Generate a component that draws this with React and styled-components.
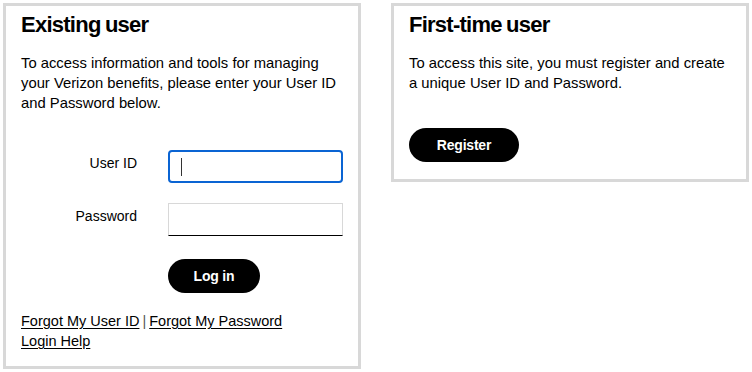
import React from "react";
import styled, { createGlobalStyle } from "styled-components";

const Global = createGlobalStyle`
  html, body { margin: 0; padding: 0; background: #fff; }
  body {
    font-family: "Liberation Sans", Arial, Helvetica, sans-serif;
    color: #000;
    -webkit-font-smoothing: antialiased;
  }
  * { box-sizing: border-box; }
`;

const Page = styled.div`
  display: flex;
  align-items: flex-start;
  gap: 30px;
  padding: 3px;
`;

const Card = styled.section`
  width: 358px;
  border: 3px solid #d8d8d8;
  padding: 6px 15px ${(p) => p.$padBottom || 15}px;
  display: flex;
  flex-direction: column;
  align-items: flex-start;
`;

const Heading = styled.h2`
  margin: 0;
  font-size: 22px;
  line-height: 26px;
  font-weight: 700;
  letter-spacing: -0.75px;
  word-spacing: -1px;
`;

const Intro = styled.p`
  margin: 15px 0 0;
  font-size: 14.8px;
  line-height: 20px;
`;

const Form = styled.div`
  margin-top: 37px;
  width: 100%;
  display: grid;
  grid-template-columns: 116px 1fr;
  column-gap: 31px;
  row-gap: 20px;
  align-items: start;
`;

const Label = styled.label`
  font-size: 14px;
  line-height: 20px;
  text-align: right;
  padding-top: 3px;
`;

const InputWrap = styled.div`
  position: relative;
  height: 33px;
`;

const Input = styled.input`
  width: 100%;
  height: 33px;
  margin: 0;
  padding: 0 12px;
  font: inherit;
  font-size: 14px;
  background: #fff;
  outline: none;
  border: ${(p) => (p.$focused ? "2px solid #0a64d3" : "1px solid #d8d8d8")};
  border-bottom-color: ${(p) => (p.$focused ? "#0a64d3" : "#000")};
  border-radius: ${(p) => (p.$focused ? "4px" : "0")};
`;

const Caret = styled.span`
  position: absolute;
  left: 13px;
  top: 8px;
  width: 1px;
  height: 18px;
  background: #333;
`;

const ButtonCell = styled.div`
  grid-column: 2;
  margin-top: 3px;
`;

const PillButton = styled.button`
  width: ${(p) => p.$width}px;
  height: 34px;
  border: none;
  border-radius: 17px;
  background: #000;
  color: #fff;
  font-family: "Liberation Sans", Arial, Helvetica, sans-serif;
  font-size: 14px;
  font-weight: 700;
  letter-spacing: -0.2px;
  cursor: pointer;
  margin-top: ${(p) => p.$mt || 0}px;
`;

const Links = styled.div`
  margin-top: 18px;
  font-size: 14.5px;
  line-height: 20px;
`;

const Link = styled.a`
  color: #000;
  text-decoration: underline;
  text-underline-offset: 2px;
`;

const Sep = styled.span`
  color: #555;
  padding: 0 3px;
`;

export default function App() {
  return (
    <>
      <Global />
      <Page>
        <Card>
          <Heading>Existing user</Heading>
          <Intro>
            To access information and tools for managing
            <br />
            your Verizon benefits, please enter your User ID
            <br />
            and Password below.
          </Intro>
          <Form>
            <Label htmlFor="uid">User ID</Label>
            <InputWrap>
              <Input id="uid" $focused />
              <Caret />
            </InputWrap>
            <Label htmlFor="pwd">Password</Label>
            <InputWrap>
              <Input id="pwd" type="password" />
            </InputWrap>
            <ButtonCell>
              <PillButton $width={92}>Log in</PillButton>
            </ButtonCell>
          </Form>
          <Links>
            <Link href="#">Forgot My User ID</Link>
            <Sep>|</Sep>
            <Link href="#">Forgot My Password</Link>
            <br />
            <Link href="#">Login Help</Link>
          </Links>
        </Card>
        <Card $padBottom={17}>
          <Heading>First-time user</Heading>
          <Intro>
            To access this site, you must register and create
            <br />
            a unique User ID and Password.
          </Intro>
          <PillButton $width={110} $mt={35}>
            Register
          </PillButton>
        </Card>
      </Page>
    </>
  );
}
